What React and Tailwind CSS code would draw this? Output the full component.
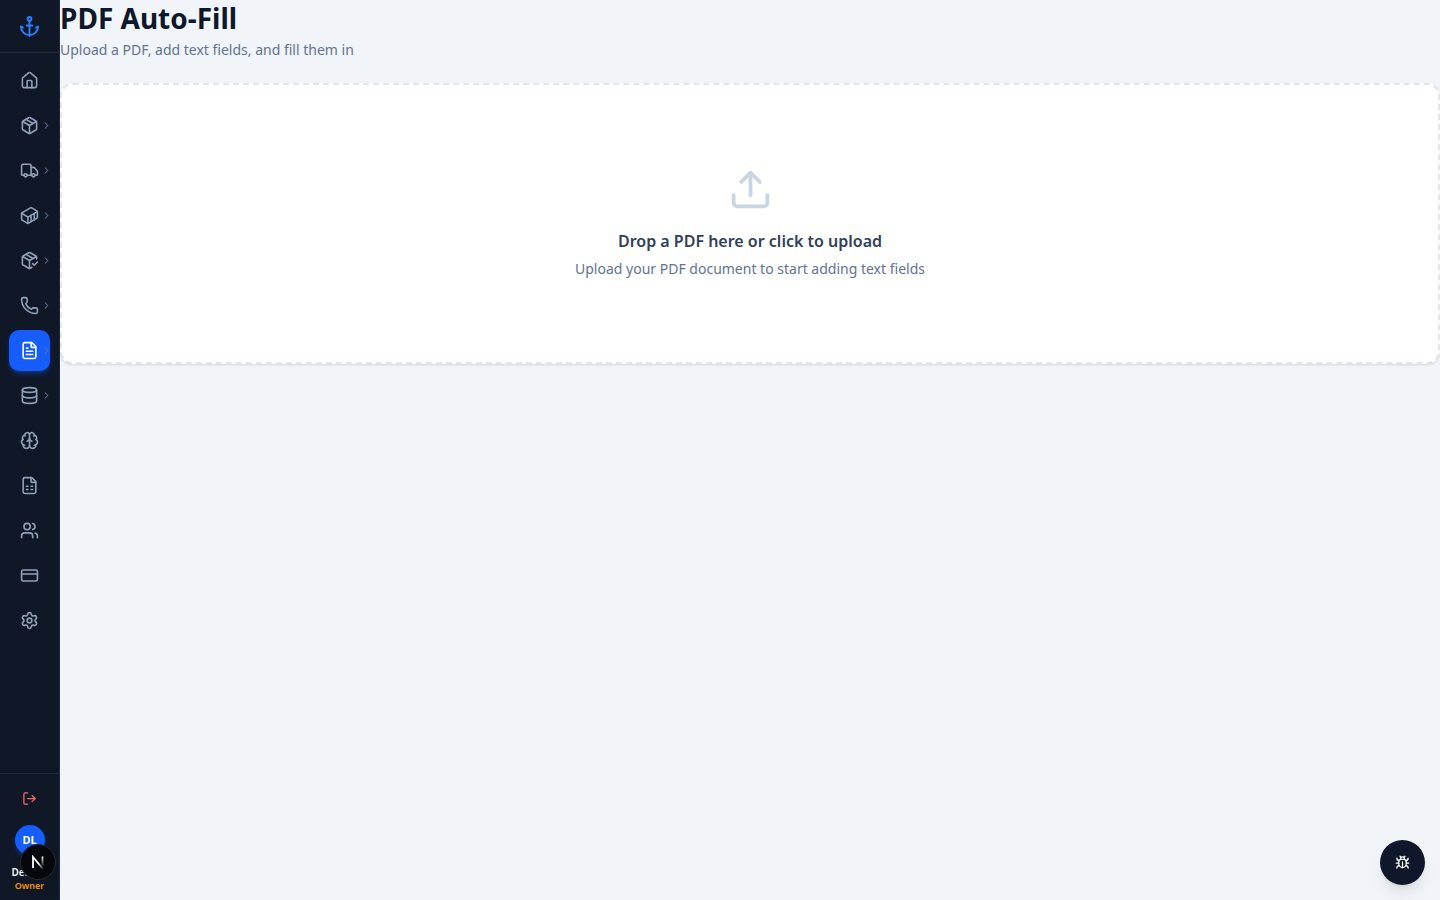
import {
  Anchor,
  Brain,
  Bug,
  ChevronRight,
  Container,
  CreditCard,
  Database,
  FileSpreadsheet,
  FileText,
  House,
  LogOut,
  Package,
  PackageCheck,
  Phone,
  Settings,
  Truck,
  Upload,
  Users,
} from 'lucide-react';
import clsx from 'clsx';

const navItems = [
  { id: 'home', icon: House },
  { id: 'packages', icon: Package, nested: true },
  { id: 'trucking', icon: Truck, nested: true },
  { id: 'containers', icon: Container, nested: true },
  { id: 'deliveries', icon: PackageCheck, nested: true },
  { id: 'calls', icon: Phone, nested: true },
  { id: 'documents', icon: FileText, nested: true, active: true },
  { id: 'data', icon: Database, nested: true },
  { id: 'ai', icon: Brain },
  { id: 'sheets', icon: FileSpreadsheet },
  { id: 'users', icon: Users },
  { id: 'billing', icon: CreditCard },
  { id: 'settings', icon: Settings },
];

const NavItem = ({ item }) => {
  const Icon = item.icon;

  return (
    <a
      href={`#${item.id}`}
      aria-label={item.id}
      className={clsx(
        'relative flex h-[41px] items-center justify-center rounded-[10px]',
        item.active ? 'bg-[#155dfc] text-white shadow-md shadow-blue-600/30' : 'text-[#90a1b9]'
      )}
    >
      <Icon size={19} strokeWidth={2} />
      {item.nested && (
        <ChevronRight size={11} strokeWidth={2.25} className="absolute right-[-2px] top-[15px] text-[#62748e]" />
      )}
    </a>
  );
};

const DevBadge = () => (
  <button
    type="button"
    aria-label="dev tools"
    className="absolute -right-2 top-[19px] flex size-9 items-center justify-center rounded-full border border-[#2b2b2b] bg-[#05070c] shadow-lg"
  >
    <svg width="14" height="14" viewBox="0 0 14 14" fill="none">
      <defs>
        <linearGradient id="diagonal" x1="8" y1="8" x2="13" y2="14" gradientUnits="userSpaceOnUse">
          <stop stopColor="#fff" />
          <stop offset="1" stopColor="#fff" stopOpacity="0" />
        </linearGradient>
        <linearGradient id="stem" x1="11" y1="1" x2="11" y2="12" gradientUnits="userSpaceOnUse">
          <stop stopColor="#fff" />
          <stop offset="1" stopColor="#fff" stopOpacity="0" />
        </linearGradient>
      </defs>
      <path d="M2 13V2L12 14" stroke="url(#diagonal)" strokeWidth="1.8" />
      <path d="M11.5 1.5v10.5" stroke="url(#stem)" strokeWidth="1.8" />
    </svg>
  </button>
);

const Sidebar = () => (
  <aside className="flex w-[60px] shrink-0 flex-col border-r border-[#1d293d] bg-[#101828]">
    <div className="flex h-[53px] items-center justify-center border-b border-[#1d293d]">
      <Anchor size={23} className="text-[#2b7fff]" />
    </div>

    <nav className="flex flex-1 flex-col gap-1 px-[9px] py-[7px]">
      {navItems.map((item) => <NavItem key={item.id} item={item} />)}
    </nav>

    <div className="flex flex-col items-center border-t border-[#1d293d] pt-[9px] pb-[7px]">
      <button type="button" aria-label="logout" className="flex size-[30px] items-center justify-center text-[#ff6467]">
        <LogOut size={15} />
      </button>
      <div className="relative mt-3 flex flex-col items-center">
        <div className="flex size-[30px] items-center justify-center rounded-full bg-[#155dfc] text-[11px] font-bold text-white shadow-md shadow-blue-600/30">
          DL
        </div>
        <p className="mt-[10px] w-9 overflow-hidden whitespace-nowrap text-[10px] leading-[14px] font-semibold text-white">
          Demo
        </p>
        <p className="text-[9px] leading-[14px] font-semibold text-[#fe9a00]">Owner</p>
        <DevBadge />
      </div>
    </div>
  </aside>
);

const UploadZone = () => (
  <button
    type="button"
    className="flex w-full flex-col items-center rounded-[13px] border-2 border-dashed border-[#e5e5e5] bg-white px-8 pt-[82px] pb-[81px] shadow-sm"
  >
    <Upload size={45} className="text-[#cad5e2]" />
    <span className="mt-[17px] text-[16px] leading-6 font-semibold text-[#314158]">
      Drop a PDF here or click to upload
    </span>
    <span className="mt-1 text-[14px] leading-6 text-[#62748e]">
      Upload your PDF document to start adding text fields
    </span>
  </button>
);

export default function App() {
  return (
    <div className="flex min-h-screen bg-[#f1f5f9] font-['Noto_Sans','Open_Sans',sans-serif]">
      <Sidebar />

      <main className="min-w-0 flex-1">
        <h1 className="text-[28px] leading-9 font-bold text-[#0f172b]">PDF Auto-Fill</h1>
        <p className="mt-[2px] mb-[21px] text-[14px] leading-6 text-[#62748e]">
          Upload a PDF, add text fields, and fill them in
        </p>
        <UploadZone />
      </main>

      <button
        type="button"
        aria-label="report a bug"
        className="fixed right-[15px] bottom-[15px] flex size-[45px] items-center justify-center rounded-full bg-[#0f172b] text-white shadow-lg"
      >
        <Bug size={15} />
      </button>
    </div>
  );
}
